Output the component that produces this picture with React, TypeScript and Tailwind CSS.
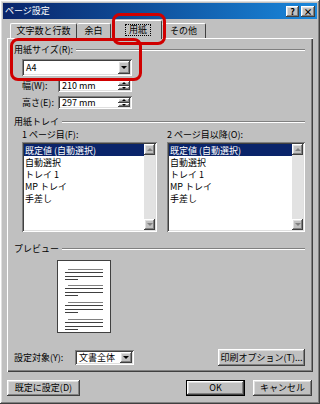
import React from 'react';

// Win classic bevels
const raised =
  'shadow-[inset_-1px_-1px_0_#404040,inset_1px_1px_0_#ffffff,inset_-2px_-2px_0_#808080,inset_2px_2px_0_#dfdfdf]';
const sunken =
  'shadow-[inset_1px_1px_0_#808080,inset_-1px_-1px_0_#ffffff,inset_2px_2px_0_#404040,inset_-2px_-2px_0_#dfdfdf]';

const DownTri = ({ color = 'border-t-black' }: { color?: string }) => (
  <span className={`w-0 h-0 border-l-[3px] border-r-[3px] border-t-[3px] border-l-transparent border-r-transparent ${color}`} />
);
const UpTri = ({ color = 'border-b-black' }: { color?: string }) => (
  <span className={`w-0 h-0 border-l-[3px] border-r-[3px] border-b-[3px] border-l-transparent border-r-transparent ${color}`} />
);

const GroupLabel = ({ text }: { text: string }) => (
  <div className="flex items-center h-[12px] gap-[3px]">
    <span className="whitespace-nowrap">{text}</span>
    <div className="flex-1 h-[2px] border-t border-t-[#808080] border-b border-b-white" />
  </div>
);

const Select = ({ value, className }: { value: string; className: string }) => (
  <div className={`flex items-center bg-white p-[2px] ${sunken} ${className}`}>
    <span className="flex-1 pl-[2px] leading-none">{value}</span>
    <div className={`w-[12px] h-full flex items-center justify-center bg-[#c0c0c0] ${raised}`}>
      <DownTri />
    </div>
  </div>
);

const Spin = ({ label, value }: { label: string; value: string }) => (
  <div className="flex items-center h-[13px] ml-[8px]">
    <span className="w-[36px] whitespace-nowrap">{label}</span>
    <div className={`w-[74px] h-full flex bg-white p-[2px] ${sunken}`}>
      <span className="flex-1 pl-[2px] leading-[9px]">{value}</span>
      <div className="w-[12px] flex flex-col">
        <div className={`flex-1 flex items-center justify-center bg-[#c0c0c0] ${raised}`}>
          <span className="w-0 h-0 border-l-[2px] border-r-[2px] border-b-[2px] border-l-transparent border-r-transparent border-b-black" />
        </div>
        <div className={`flex-1 flex items-center justify-center bg-[#c0c0c0] ${raised}`}>
          <span className="w-0 h-0 border-l-[2px] border-r-[2px] border-t-[2px] border-l-transparent border-r-transparent border-t-black" />
        </div>
      </div>
    </div>
  </div>
);

const trays = ['既定値 (自動選択)', '自動選択', 'トレイ 1', 'MP トレイ', '手差し'];

const ListBox = ({ className }: { className: string }) => (
  <div className={`flex bg-white p-[2px] ${sunken} ${className}`}>
    <div className="flex-1 flex flex-col">
      {trays.map((t, i) => (
        <div
          key={t}
          className={`h-[12px] flex items-center pl-[1px] whitespace-nowrap ${i === 0 ? 'bg-[#0a246a] text-white' : ''}`}
        >
          <span className="leading-[9px]">{t}</span>
        </div>
      ))}
    </div>
    <div className="w-[11px] flex flex-col">
      <div className={`h-[11px] flex items-center justify-center bg-[#c0c0c0] ${raised}`}>
        <UpTri color="border-b-[#808080]" />
      </div>
      <div className="flex-1 bg-[#e2e2e2]" />
      <div className={`h-[11px] flex items-center justify-center bg-[#c0c0c0] ${raised}`}>
        <DownTri color="border-t-[#808080]" />
      </div>
    </div>
  </div>
);

const Para = ({ mt }: { mt: string }) => (
  <div className={`flex flex-col ${mt}`}>
    <div className="h-[1px] ml-[3px] bg-[#808080]" />
    <div className="h-[1px] mt-[2px] bg-[#404040]" />
    <div className="h-[1px] mt-[3px] bg-[#404040]" />
    <div className="h-[1px] mt-[2px] w-[13px] bg-[#404040]" />
  </div>
);

const Button = ({ text, className }: { text: string; className: string }) => (
  <div className={`flex items-center justify-center bg-[#c0c0c0] whitespace-nowrap ${raised} ${className}`}>{text}</div>
);

export default function App() {
  return (
    <div
      className={`relative w-[320px] h-[404px] bg-[#c0c0c0] flex flex-col px-[3px] pt-[3px] text-[9px] leading-[12px] text-black font-['Noto_Sans_CJK_JP',sans-serif] ${raised}`}
    >
      {/* title bar */}
      <div className="h-[16px] flex items-center bg-gradient-to-r from-[#0a246a] to-[#1a88dc] pl-[2px] pr-[2px]">
        <span className="flex-1 text-white">ページ設定</span>
        <div className="flex gap-[2px]">
          <div className={`w-[13px] h-[11px] flex items-center justify-center bg-[#c0c0c0] font-bold leading-none ${raised}`}>?</div>
          <div className={`w-[14px] h-[11px] flex items-center justify-center bg-[#c0c0c0] font-bold leading-none ${raised}`}>×</div>
        </div>
      </div>

      {/* tabs */}
      <div className="h-[19px] flex items-end pl-[7px]">
        <div className="w-[67px] h-[15px] flex items-center justify-center rounded-t-[2px] border-t border-l border-white border-r border-r-[#404040]">
          文字数と行数
        </div>
        <div className="w-[34px] h-[15px] flex items-center justify-center rounded-t-[2px] border-t border-white border-r border-r-[#404040]">
          余白
        </div>
        <div className="relative z-10 ml-[3px] w-[48px] h-[19px] mb-[-1px] flex items-center justify-center bg-[#c0c0c0] rounded-t-[2px] border-t border-l border-white border-r border-r-[#404040]">
          <span className="px-[3px] outline-1 outline-dotted outline-black leading-[10px]">用紙</span>
        </div>
        <div className="w-[44px] h-[15px] flex items-center justify-center rounded-t-[2px] border-t border-white border-r border-r-[#404040]">
          その他
        </div>
      </div>

      {/* panel */}
      <div className="mx-[4px] h-[334px] flex flex-col pl-[7px] pr-[8px] pt-[6px] shadow-[inset_1px_1px_0_#ffffff,inset_-1px_-1px_0_#404040,inset_-2px_-2px_0_#808080]">
        <GroupLabel text="用紙サイズ(R):" />
        <Select value="A4" className="mt-[3px] ml-[8px] w-[110px] h-[17px]" />
        <div className="mt-[3px]">
          <Spin label="幅(W):" value="210 mm" />
        </div>
        <div className="mt-[4px]">
          <Spin label="高さ(E):" value="297 mm" />
        </div>

        <div className="mt-[7px]">
          <GroupLabel text="用紙トレイ" />
        </div>
        <div className="mt-[1px] h-[12px] flex">
          <span className="ml-[8px] w-[145px]">1 ページ目(F):</span>
          <span>2 ページ目以降(O):</span>
        </div>
        <div className="mt-[1px] flex">
          <ListBox className="ml-[8px] w-[135px] h-[90px]" />
          <ListBox className="ml-[10px] w-[138px] h-[90px]" />
        </div>

        <div className="mt-[11px]">
          <GroupLabel text="プレビュー" />
        </div>
        <div className="mt-[5px] ml-[43px] w-[54px] h-[73px] bg-white border border-[#404040] flex flex-col px-[7px] pt-[8px]">
          <Para mt="" />
          <Para mt="mt-[5px]" />
          <Para mt="mt-[6px]" />
          <Para mt="mt-[6px]" />
        </div>

        <div className="mt-[16px] h-[17px] flex items-center">
          <span className="w-[61px] whitespace-nowrap">設定対象(Y):</span>
          <Select value="文書全体" className="w-[59px] h-[15px]" />
          <div className="flex-1" />
          <Button text="印刷オプション(T)..." className="w-[87px] h-[17px]" />
        </div>
      </div>

      {/* bottom buttons */}
      <div className="mt-[8px] h-[16px] flex pl-[4px] pr-[5px]">
        <Button text="既定に設定(D)" className="w-[73px] h-full" />
        <div className="flex-1" />
        <div className="w-[59px] h-full border border-black">
          <Button text="OK" className="w-full h-full" />
        </div>
        <Button text="キャンセル" className="ml-[8px] w-[59px] h-full" />
      </div>

      {/* red highlight marks */}
      <div className="absolute left-[112px] top-[13px] w-[54px] h-[32px] border-[3px] border-[#d00000] rounded-[8px] z-20" />
      <div className="absolute left-[10px] top-[38px] w-[132px] h-[43px] border-[3px] border-[#d00000] rounded-[8px] z-20" />
    </div>
  );
}
